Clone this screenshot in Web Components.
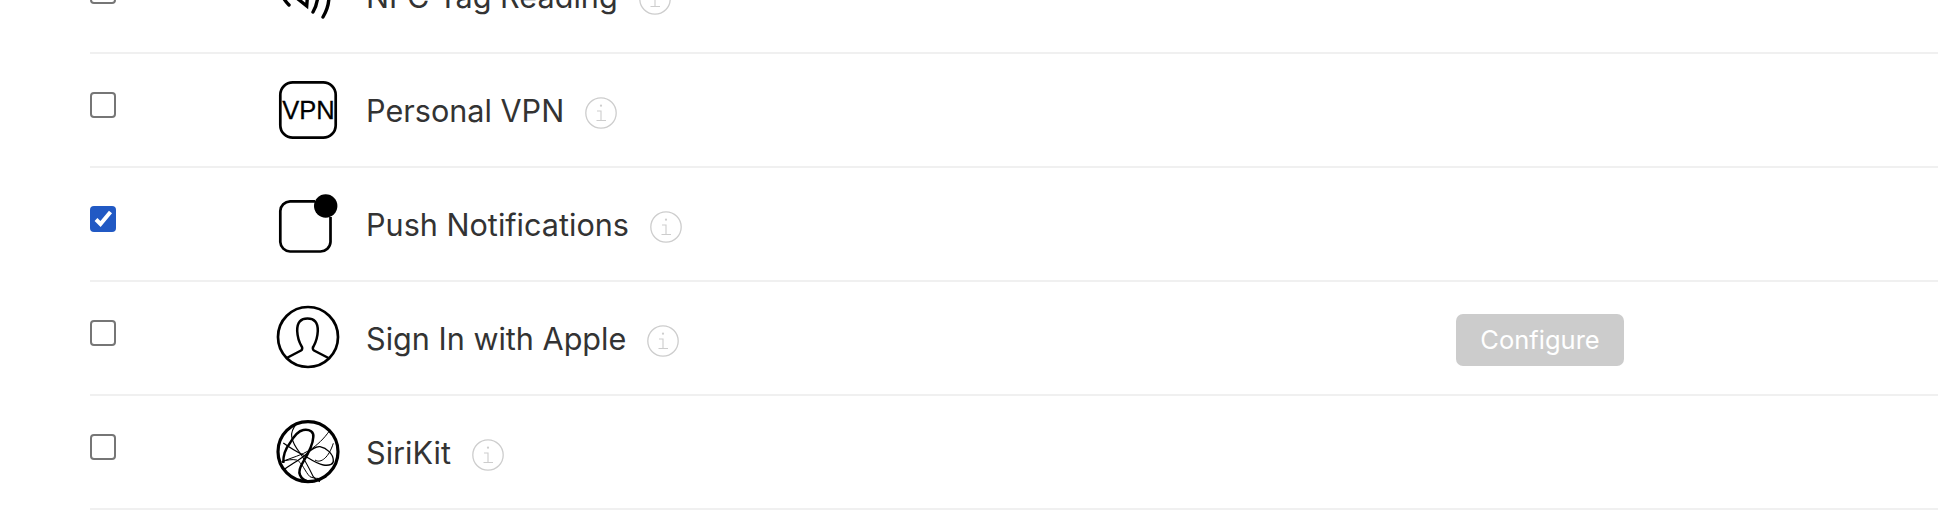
<!DOCTYPE html>
<html>
<head>
<meta charset="utf-8">
<title>Capabilities</title>
<style>
  html, body { margin: 0; padding: 0; background: #fff; overflow: hidden; height: 512px; }
</style>
</head>
<body>
<template id="cap-icon-tpl">
  <style>
    :host { display: block; width: 58px; height: 58px; }
    svg { display: block; width: 58px; height: 58px; overflow: visible; }
    text { font-family: "Liberation Sans", Arial, sans-serif; }
  </style>
  <svg viewBox="0 0 58 58" fill="none" stroke="#000"></svg>
</template>

<capability-list>
  <capability-row name="NFC Tag Reading" icon="nfc"></capability-row>
  <capability-row name="Personal VPN" icon="vpn"></capability-row>
  <capability-row name="Push Notifications" icon="push" checked></capability-row>
  <capability-row name="Sign In with Apple" icon="apple" configure></capability-row>
  <capability-row name="SiriKit" icon="siri"></capability-row>
</capability-list>

<script>
const ICONS = {
  nfc: `<g stroke-width="3.4" stroke-linecap="round">
      <path d="M2 26 C4 31 7 35 10 38"/>
      <path d="M14 28 L27.7 39 L29 22"/>
      <path d="M38 20 C40 30 38 38 34 45"/>
      <path d="M47 15 C52 28 50 40 44 50"/>
    </g>`,
  vpn: `<rect x="1.3" y="1.3" width="55.4" height="55.4" rx="12.5" stroke-width="2.7"/>
    <text x="29.5" y="38" text-anchor="middle" font-size="25.5" fill="#000" stroke="#000" stroke-width=".3">VPN</text>`,
  push: `<path d="M36 6.300 H11 A10 10 0 0 0 1.300 16 V47 A10 10 0 0 0 11 56.500 H41.500 A10 10 0 0 0 51.500 47 V22" stroke-width="2.700"/>
    <circle cx="46.700" cy="11" r="11.700" fill="#000" stroke="none"/>`,
  apple: `<circle cx="29" cy="28" r="30" stroke-width="2.700"/>
    <path d="M7.700 49 L22 41.500 C23.500 40.500 23.500 38.500 22.700 37.500 C20 33 18.500 28.500 18.200 22 C18 13 22 9.500 28.500 9.500 C35 9.500 39 13 38.800 22 C38.500 28.500 37 33 34.500 37.500 C33.500 38.500 33.500 40.500 35 41.500 L49.500 49" stroke-width="2.500"/>`,
  siri: `<circle cx="29" cy="28.700" r="30" stroke-width="3.200"/>
    <path d="M4.300 40 C4 32 7 25 11 20 C15 13 19 8 24.300 7 C31 6 35 9 34.300 14 C34 20 29 31 24.300 38.700 C21 44 19.500 49 21 52 C23 57 28 59 34 58.500" stroke-width="2.500"/>
    <path d="M4.300 20 C10 24 18 29 24.300 32 C31 36 38 41 44.300 42 C51 43 55 41 54.300 37 C54 31 48 25 41 23.700 C35 23 30 29 24.300 33.700 C18 38 10 43 4.300 47" stroke-width="1.300"/>
    <path d="M17.700 .300 C14 5 12 9 12.700 13.700 C13.500 19 17 25 21 30 C26 37 31 47 34.300 53.700 C36 56 38 58 41 58.700" stroke-width="1.100"/>
    <path d="M2.700 38.700 C8 37 13 36 17.700 37 C23 39 26 49 31 53.700 C36 56 43 56 47.700 53.700" stroke-width="1"/>
    <path d="M51 7 C45 16 38 22 31 27 C23 32 12 35 2.700 38.700" stroke-width="1"/>
    <path d="M36 37 C42 41 50 34 54.300 20.300" stroke-width="1"/>`
};

class CapIcon extends HTMLElement {
  constructor() {
    super();
    const root = this.attachShadow({ mode: "open" });
    root.appendChild(document.getElementById("cap-icon-tpl").content.cloneNode(true));
  }
  connectedCallback() {
    this.shadowRoot.querySelector("svg").innerHTML = ICONS[this.getAttribute("kind")] || "";
  }
}
customElements.define("cap-icon", CapIcon);

class CapCheckbox extends HTMLElement {
  constructor() {
    super();
    this.attachShadow({ mode: "open" });
  }
  connectedCallback() {
    const on = this.hasAttribute("checked");
    this.shadowRoot.innerHTML = `
      <style>
        :host { display: block; width: 26px; height: 26px; }
        .box {
          box-sizing: border-box;
          width: 26px;
          height: 26px;
          border: 2px solid #767676;
          border-radius: 4px;
          background: #fff;
        }
        .box.on { border: 0; background: #2159c4; }
        svg { display: block; width: 26px; height: 26px; }
      </style>
      <div class="box ${on ? "on" : ""}">
        ${on ? `<svg viewBox="0 0 26 26"><path d="M6 13.500 L10.500 18 L20.500 6" fill="none" stroke="#fff" stroke-width="4"/></svg>` : ""}
      </div>`;
  }
}
customElements.define("cap-checkbox", CapCheckbox);

class InfoBadge extends HTMLElement {
  constructor() {
    super();
    this.attachShadow({ mode: "open" });
    this.shadowRoot.innerHTML = `
      <style>
        :host { display: block; width: 32px; height: 32px; }
        svg { display: block; width: 32px; height: 32px; }
      </style>
      <svg viewBox="0 0 32 32" fill="none" stroke="#cdcdcd" stroke-width="1.300">
        <circle cx="16" cy="16" r="15.200"/>
        <path d="M12 14 H16 V23.500 M11.500 23.500 H21" stroke-width="1.100"/>
        <circle cx="16" cy="8.700" r="1.100" fill="#cdcdcd" stroke="none"/>
      </svg>`;
  }
}
customElements.define("info-badge", InfoBadge);

class CapabilityRow extends HTMLElement {
  constructor() {
    super();
    this.attachShadow({ mode: "open" });
  }
  connectedCallback() {
    const name = this.getAttribute("name");
    const checked = this.hasAttribute("checked") ? "checked" : "";
    const btn = this.hasAttribute("configure") ? `<button>Configure</button>` : "";
    this.shadowRoot.innerHTML = `
      <style>
        :host {
          display: grid;
          grid-template-columns: 189px 87px 1090px 168px;
          height: 114px;
          box-sizing: border-box;
          border-bottom: 2px solid #f0f0f0;
          font-family: Inter, "Noto Sans", sans-serif;
        }
        .check { padding-top: 38px; }
        .icon { padding-top: 27px; }
        .label {
          display: flex;
          align-items: flex-start;
          gap: 21px;
          padding-top: 39px;
          font-size: 30.6px;
          line-height: 36px;
          color: #333;
          white-space: nowrap;
        }
        info-badge { margin-top: 4px; }
        .action { padding-top: 32px; }
        button {
          display: block;
          box-sizing: border-box;
          width: 168px;
          height: 52px;
          border: 0;
          border-radius: 7px;
          background: #ccc;
          color: #fff;
          font: 400 25.500px Inter, "Noto Sans", sans-serif;
          padding: 0 0 2px;
        }
      </style>
      <div class="check"><cap-checkbox ${checked}></cap-checkbox></div>
      <div class="icon"><cap-icon kind="${this.getAttribute("icon")}"></cap-icon></div>
      <div class="label"><span>${name}</span><info-badge></info-badge></div>
      <div class="action">${btn}</div>`;
  }
}
customElements.define("capability-row", CapabilityRow);

class CapabilityList extends HTMLElement {
  constructor() {
    super();
    this.attachShadow({ mode: "open" });
    this.shadowRoot.innerHTML = `
      <style>
        :host { display: block; margin: -60px 0 0 90px; }
      </style>
      <slot></slot>`;
  }
}
customElements.define("capability-list", CapabilityList);
</script>
</body>
</html>
